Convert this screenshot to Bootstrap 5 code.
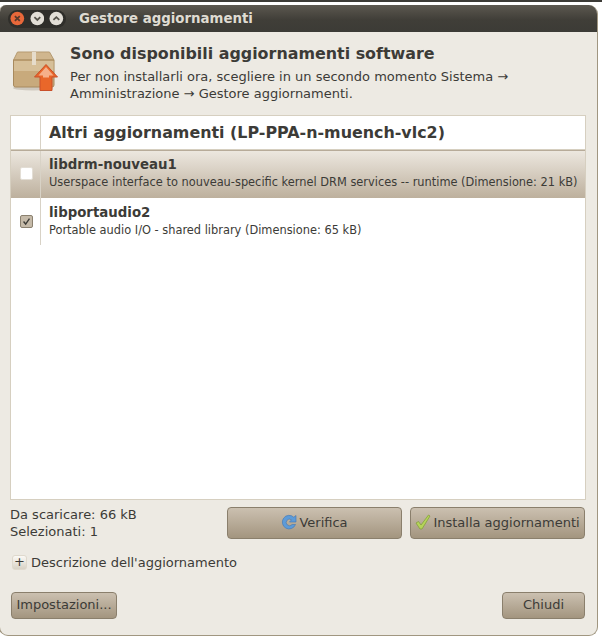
<!DOCTYPE html>
<html lang="it">
<head>
<meta charset="UTF-8">
<title>Gestore aggiornamenti</title>
<link href="https://cdn.jsdelivr.net/npm/bootstrap@5.3.3/dist/css/bootstrap.min.css" rel="stylesheet">
<style>
html, body { height: 638px; overflow: hidden; }
body { background: #fff; font-family: "DejaVu Sans", sans-serif; font-size: 13px; line-height: 17px; color: #3c3b37; border-top: 2px solid #3c3b37; padding-top: 3px; }
.win { width: 599px; height: 631px; margin-left: -1px; background: #edeae3; border: 1px solid #a09680; border-top: 0; border-radius: 7px 9px 9px 9px; overflow: hidden; }
.tbar { height: 27px; margin: 0 -1px; background: linear-gradient(#5c5850, #403e38 55%, #3c3b36); color: #dfdbd2; font-weight: 700; font-size: 13.33px; padding-left: 9px; }
.wbtns { background: #2f2e2a; border-radius: 9px; height: 18px; padding: 0 2px; gap: 5px; width: 58px; margin-right: 13px; }
.wbtn { width: 15px; height: 15px; }
.hdr { height: 83px; padding: 12px 0 0 12px; }
.hdr h1 { font-size: 15.9px; font-weight: 700; line-height: 20px; margin: 0 0 4px; }
.hicon { width: 50px; margin-right: 8px; flex: none; }
.upd { height: 385px; width: 576px; margin-left: 10px; background: #fff; border: 1px solid #d6cfc0; }
.uhead { height: 34px; border-bottom: 1px solid #d6cfc0; font-weight: 700; font-size: 15.9px; line-height: 33px; }
.chk { width: 30px; border-right: 1px solid #d8d2c6; flex: none; padding-left: 1px; }
.urow { height: 47px; }
.urow.sel { height: 48px; background: linear-gradient(#ece7df, #bdb09d); border-top: 1px solid #b7ab99; }
.utext { padding: 6px 0 0 8px; }
.sel .utext { padding-top: 5px; }
.utext b { display: block; font-size: 13.33px; line-height: 18px; }
.utext span { display: block; font-size: 11.4px; line-height: 15px; padding-top: 1px; }
.cbx { width: 13px; height: 13px; border-radius: 2px; }
.cbx.off { background: #fff; border: 1px solid #e3ded5; margin-bottom: 2px; }
.cbx.on { background: #c5baa9; border: 1px solid #8b8170; }
.stat { padding: 6px 12px 0 10px; height: 52px; }
.gbtn { height: 32px; background: linear-gradient(#cbc0b0, #a3957f); border: 1px solid #8a7f6c; border-radius: 4px; color: #3c3b37; font-size: 13px; padding: 0 0 2px; gap: 2px; line-height: 1; }
.stat .gbtn { margin-top: 1px; }
.b-ver { width: 175px; margin-right: 8px; }
.b-ins { width: 175px; }
.expd { padding-left: 12px; height: 20px; gap: 4px; }
.plus { width: 15px; height: 15px; background: linear-gradient(#fbf9f5, #d8d2c5); border: 1px solid #dfd9cd; border-radius: 3px; font-size: 13px; line-height: 12px; text-align: center; }
.foot { padding: 0 12px 0 11px; margin-top: 20px; }
.b-imp { width: 106px; height: 27px; }
.b-chi { width: 83px; height: 27px; }
</style>
</head>
<body>
<div class="win">
  <div class="tbar d-flex align-items-center">
    <div class="wbtns d-flex align-items-center">
      <svg class="wbtn" viewBox="0 0 15 15"><circle cx="7.5" cy="7.5" r="7" fill="#e8683a"/><path d="M5 5l5 5M10 5l-5 5" stroke="#5a3a2c" stroke-width="1.8"/></svg>
      <svg class="wbtn" viewBox="0 0 15 15"><circle cx="7.5" cy="7.5" r="7" fill="#e2ded6"/><path d="M4.5 6.2l3 2.8 3-2.8" fill="none" stroke="#55524a" stroke-width="1.8"/></svg>
      <svg class="wbtn" viewBox="0 0 15 15"><circle cx="7.5" cy="7.5" r="7" fill="#e2ded6"/><path d="M4.5 9l3-2.8 3 2.8" fill="none" stroke="#55524a" stroke-width="1.8"/></svg>
    </div>
    <span>Gestore aggiornamenti</span>
  </div>
  <div class="hdr d-flex">
    <svg class="hicon" height="50" viewBox="0 0 50 50">
      <ellipse cx="21" cy="44" rx="20" ry="2.500" fill="#cfc9be"/>
      <path d="M1.500 16l4-8h32l4.500 8z" fill="#d0b68e" stroke="#b59a70"/>
      <path d="M1.500 16h40.500v25a2 2 0 0 1-2 2H3.500a2 2 0 0 1-2-2z" fill="#c8aa7c" stroke="#a88a5e"/>
      <path d="M2 17h39.500v10H2z" fill="#d6bf98"/>
      <rect x="20" y="8" width="4" height="13" fill="#e6dccb"/>
      <path d="M34 20.500l11.500 12.500H40v13.500H28V33h-5.500z" fill="#e9672a" stroke="#c9502a"/>
      <path d="M34 23l7.500 8.500H37v2h-6v-2h-4.500z" fill="#f6b08a"/>
    </svg>
    <div>
      <h1>Sono disponibili aggiornamenti software</h1>
      <div>Per non installarli ora, scegliere in un secondo momento Sistema →<br>Amministrazione → Gestore aggiornamenti.</div>
    </div>
  </div>
  <div class="upd">
    <div class="uhead d-flex">
      <div class="chk"></div>
      <div class="ps-2">Altri aggiornamenti (LP-PPA-n-muench-vlc2)</div>
    </div>
    <div class="urow sel d-flex">
      <div class="chk d-flex align-items-center justify-content-center"><div class="cbx off"></div></div>
      <div class="utext"><b>libdrm-nouveau1</b><span>Userspace interface to nouveau-specific kernel DRM services -- runtime (Dimensione: 21 kB)</span></div>
    </div>
    <div class="urow d-flex">
      <div class="chk d-flex align-items-center justify-content-center">
        <svg class="cbx on" viewBox="0 0 13 13"><path d="M3 6.500l2.500 3L10 3" fill="none" stroke="#3c3b37" stroke-width="1.600"/></svg>
      </div>
      <div class="utext"><b>libportaudio2</b><span>Portable audio I/O - shared library (Dimensione: 65 kB)</span></div>
    </div>
  </div>
  <div class="stat d-flex">
    <div class="flex-grow-1">Da scaricare: 66 kB<br>Selezionati: 1</div>
    <button type="button" class="btn gbtn b-ver d-flex align-items-center justify-content-center">
      <svg width="16" height="16" viewBox="0 0 16 16"><path d="M14.500 10.500A6.800 6.800 0 1 1 12.800 3.200L15 1.500V8H8.500l2-2.200a3.300 3.300 0 1 0 .6 4.700z" fill="#5d9bd8" stroke="#3f76b3" stroke-width=".6"/></svg>
      <span>Verifica</span>
    </button>
    <button type="button" class="btn gbtn b-ins d-flex align-items-center justify-content-center">
      <svg width="16" height="16" viewBox="0 0 16 16"><path d="M1 9l2.500-1.500L6 11 13.500 1l1.500 1L7 15H5z" fill="#b5d45a" stroke="#7f9c34" stroke-width=".7"/></svg>
      <span>Installa aggiornamenti</span>
    </button>
  </div>
  <div class="expd d-flex align-items-center">
    <div class="plus">+</div>
    <span>Descrizione dell'aggiornamento</span>
  </div>
  <div class="foot d-flex justify-content-between">
    <button type="button" class="btn gbtn b-imp">Impostazioni...</button>
    <button type="button" class="btn gbtn b-chi">Chiudi</button>
  </div>
</div>
</body>
</html>
